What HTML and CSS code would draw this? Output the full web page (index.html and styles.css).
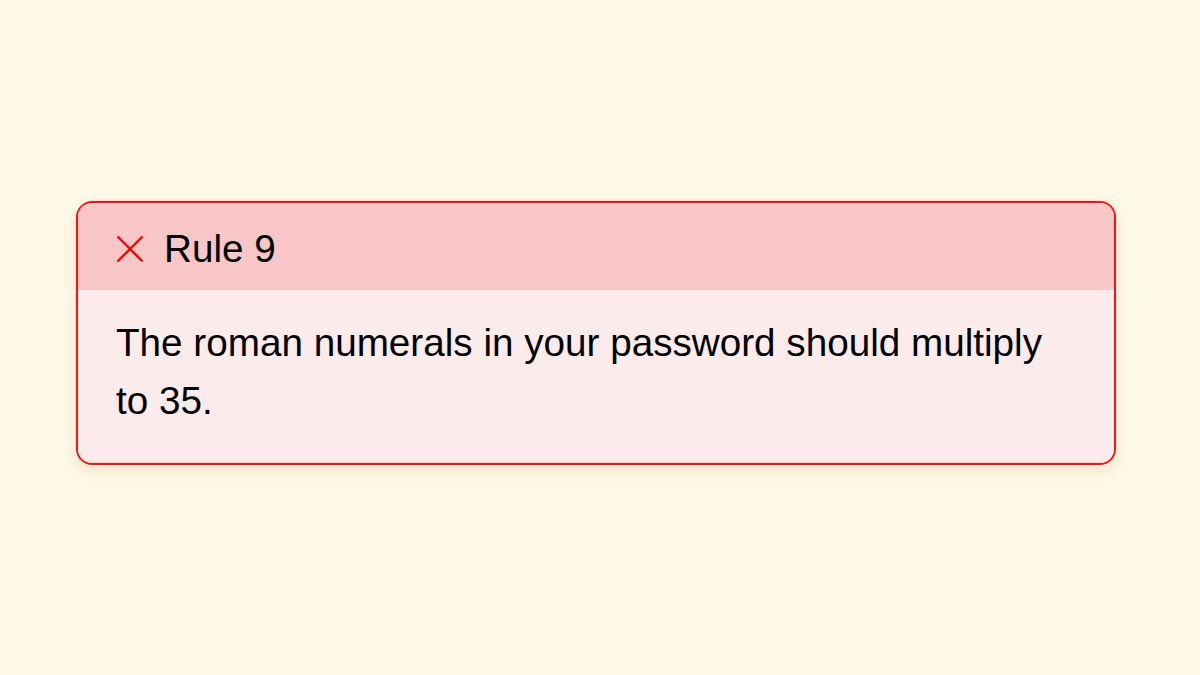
FILE: index.html
```html
<!DOCTYPE html>
<html>
<head>
<meta charset="utf-8">
<link rel="stylesheet" href="styles.css">
</head>
<body>
<main class="page">
  <section class="rule">
    <header class="rule-head">
      <svg class="rule-icon" width="28" height="28" viewBox="0 0 28 28"><path d="M1.5 1.5 L26.5 26.5 M26.5 1.5 L1.5 26.5" stroke="#ff0000" stroke-width="2.4" fill="none"/></svg>
      <span class="rule-title">Rule 9</span>
    </header>
    <div class="rule-body">The roman numerals in your password should multiply to 35.</div>
  </section>
</main>
</body>
</html>
```
FILE: styles.css
```css
html, body {
  margin: 0;
  padding: 0;
}
body {
  background: #fdf9e6;
  font-family: "Liberation Sans", Arial, sans-serif;
  color: #000;
}
.page {
  width: 1200px;
  height: 675px;
  box-sizing: border-box;
  padding: 201px 0 0 76px;
}
.rule {
  width: 1040px;
  box-sizing: border-box;
  border: 2px solid #ff1010;
  border-radius: 16px;
  overflow: hidden;
  box-shadow: 0 6px 14px rgba(240, 120, 80, 0.18);
}
.rule-head {
  height: 87px;
  box-sizing: border-box;
  background: #f8c6c6;
  display: flex;
  align-items: center;
  gap: 20px;
  padding: 17px 38px 12px;
}
.rule-icon {
  display: block;
  flex: none;
}
.rule-title {
  font-size: 29pt;
  line-height: 58px;
}
.rule-body {
  background: #fcebeb;
  font-size: 29pt;
  line-height: 58px;
  padding: 24px 38px 33px;
}
```
